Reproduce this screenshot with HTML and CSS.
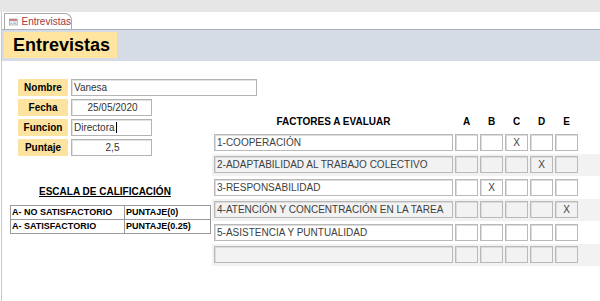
FILE: index.html
```html
<!DOCTYPE html>
<html>
<head>
	<title> Entrevistas </title>
	<link rel="stylesheet" href="styles.css">
</head>
<body>
    <div class="topbar"></div>
    <div class="frame">
        <div class="tabs">
            <div class="tab">
                <svg width="13" height="10" viewBox="0 0 13 10">
                    <rect x="0.5" y="0.5" width="12" height="9" fill="#fff" stroke="#8a8a8a"/>
                    <rect x="1" y="1" width="11" height="2" fill="#c0504d"/>
                    <rect x="2" y="4.5" width="3" height="1" fill="#7f9fc6"/>
                    <rect x="6" y="4.5" width="5" height="1" fill="#7f9fc6"/>
                    <rect x="2" y="6.5" width="3" height="1" fill="#7f9fc6"/>
                    <rect x="6" y="6.5" width="5" height="1" fill="#7f9fc6"/>
                </svg>
                <span>Entrevistas</span>
            </div>
        </div>

        <div class="band">
            <h1 class="title">Entrevistas</h1>
        </div>

        <div class="content">
            <div class="left">
                <div class="form">
                    <div class="field">
                        <div class="label">Nombre</div>
                        <div class="input wide">Vanesa</div>
                    </div>
                    <div class="field">
                        <div class="label">Fecha</div>
                        <div class="input center">25/05/2020</div>
                    </div>
                    <div class="field">
                        <div class="label">Funcion</div>
                        <div class="input"><span class="caret">Directora</span></div>
                    </div>
                    <div class="field">
                        <div class="label">Puntaje</div>
                        <div class="input center">2,5</div>
                    </div>
                </div>

                <div class="escala">
                    <h2>ESCALA DE CALIFICACIÓN</h2>
                    <table>
                        <tr><td>A- NO SATISFACTORIO</td><td>PUNTAJE(0)</td></tr>
                        <tr><td>A- SATISFACTORIO</td><td>PUNTAJE(0.25)</td></tr>
                    </table>
                </div>
            </div>

            <div class="right">
                <div class="head-row">
                    <div class="factor-head">FACTORES A EVALUAR</div>
                    <div class="col">A</div>
                    <div class="col">B</div>
                    <div class="col">C</div>
                    <div class="col">D</div>
                    <div class="col">E</div>
                </div>

                <div class="row">
                    <div class="factor">1-COOPERACIÓN</div>
                    <div class="box"></div><div class="box"></div><div class="box">X</div><div class="box"></div><div class="box"></div>
                </div>
                <div class="row alt">
                    <div class="factor">2-ADAPTABILIDAD AL TRABAJO COLECTIVO</div>
                    <div class="box"></div><div class="box"></div><div class="box"></div><div class="box">X</div><div class="box"></div>
                </div>
                <div class="row">
                    <div class="factor">3-RESPONSABILIDAD</div>
                    <div class="box"></div><div class="box">X</div><div class="box"></div><div class="box"></div><div class="box"></div>
                </div>
                <div class="row alt">
                    <div class="factor">4-ATENCIÓN Y CONCENTRACIÓN EN LA TAREA</div>
                    <div class="box"></div><div class="box"></div><div class="box"></div><div class="box"></div><div class="box">X</div>
                </div>
                <div class="row">
                    <div class="factor">5-ASISTENCIA Y PUNTUALIDAD</div>
                    <div class="box"></div><div class="box"></div><div class="box"></div><div class="box"></div><div class="box"></div>
                </div>
                <div class="row alt">
                    <div class="factor"></div>
                    <div class="box"></div><div class="box"></div><div class="box"></div><div class="box"></div><div class="box"></div>
                </div>
            </div>
        </div>
    </div>
</body>
</html>
```

FILE: styles.css
```css
body {
    font-family: 'Liberation Sans', Arial, sans-serif;
    font-size: 10px;
    color: #000;
    margin: 0;
    background: #fff;
    overflow: hidden;
}
.topbar {
    height: 12px;
    background-color: #e6e6e6;
}
.frame {
    margin-left: 1px;
    border-left: 1px solid #c8c8c8;
    height: 289px;
}
.tabs {
    height: 17px;
    display: flex;
    align-items: flex-end;
    padding-left: 2px;
}
.tab {
    box-sizing: border-box;
    height: 16px;
    width: 68px;
    display: flex;
    align-items: center;
    gap: 4px;
    padding-left: 4px;
    border: 1px solid #a9a9a9;
    border-bottom: none;
    border-top-right-radius: 7px;
    background: #fff;
    color: #a4373a;
    font-size: 10px;
}
.band {
    border-top: 1px solid #a9b0b8;
    background-color: #d5dce6;
    height: 32px;
    padding: 2px 0 0 2px;
    box-sizing: border-box;
}
.title {
    margin: 0;
    width: 113px;
    height: 26px;
    background-color: #ffe59f;
    font-size: 18px;
    font-weight: bold;
    line-height: 26px;
    padding-left: 9px;
    box-sizing: border-box;
}
.content {
    display: flex;
}
.left {
    width: 210px;
    flex-shrink: 0;
    padding-top: 18px;
}
.form {
    padding-left: 16px;
    display: flex;
    flex-direction: column;
    gap: 3px;
}
.field {
    display: flex;
    gap: 3px;
    height: 17px;
}
.label {
    width: 50px;
    flex-shrink: 0;
    background-color: #fce4a0;
    font-weight: bold;
    text-align: center;
    line-height: 17px;
}
.input {
    box-sizing: border-box;
    width: 81px;
    flex-shrink: 0;
    border: 1px solid #b3b3b3;
    box-shadow: inset 1px 1px 0 #e2e2e2;
    background: #fff;
    color: #333;
    padding-left: 2px;
    line-height: 15px;
    white-space: nowrap;
    position: relative;
    z-index: 1;
}
.input.wide {
    width: 186px;
}
.input.center {
    text-align: center;
}
.caret {
    border-right: 1px solid #000;
    padding-right: 1px;
}
.escala {
    margin-top: 30px;
}
.escala h2 {
    margin: 0 0 8px 37px;
    font-size: 10px;
    font-weight: bold;
    text-decoration: underline;
}
.escala table {
    margin-left: 8px;
    width: 201px;
    border-collapse: collapse;
    font-weight: bold;
    font-size: 9px;
    table-layout: fixed;
}
.escala td {
    border: 1px solid #9a9a9a;
    height: 13px;
    padding: 0 1px;
    line-height: 13px;
    white-space: nowrap;
    overflow: hidden;
}
.escala td:first-child {
    width: 111px;
}
.right {
    flex: 1;
    padding-top: 51px;
}
.head-row {
    display: flex;
    gap: 2px;
    padding-left: 2px;
    height: 19px;
    font-weight: bold;
    align-items: center;
}
.factor-head {
    width: 239px;
    text-align: center;
}
.col {
    width: 23px;
    text-align: center;
}
.row {
    display: flex;
    gap: 2px;
    height: 22.5px;
    padding: 2.5px 0 0 2px;
    box-sizing: border-box;
}
.row.alt {
    background-color: #f2f2f2;
}
.factor, .box {
    box-sizing: border-box;
    height: 17px;
    border: 1px solid #b9b9b9;
    box-shadow: inset 1px 1px 0 #dcdcdc;
    color: #404040;
    line-height: 15px;
}
.factor {
    width: 239px;
    padding-left: 2px;
    white-space: nowrap;
    overflow: hidden;
}
.box {
    width: 23px;
    text-align: center;
}
```
